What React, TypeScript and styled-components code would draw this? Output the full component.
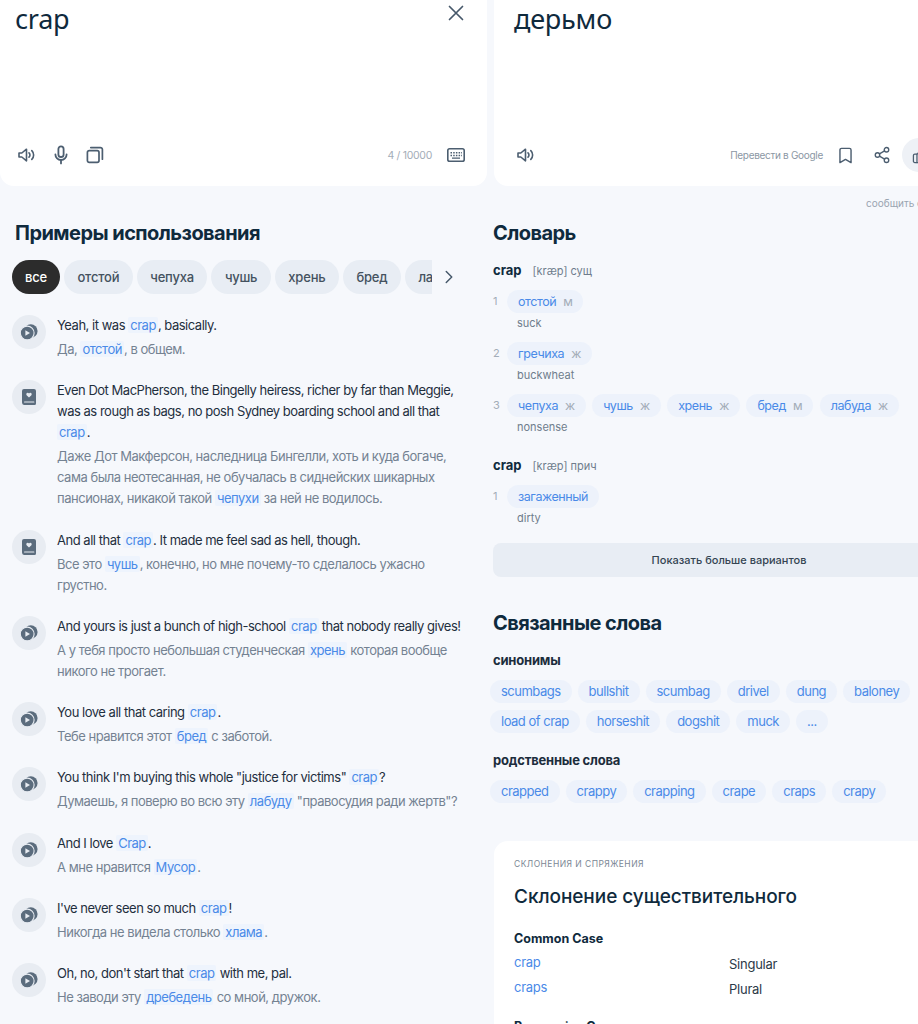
import React from "react";
import styled, { createGlobalStyle } from "styled-components";
import { Bookmark, ChevronRight, Share2, ThumbsUp } from "lucide-react";

const GlobalStyle = createGlobalStyle`
  html, body {
    margin: 0;
    background: #f6f8fc;
    font-family: Inter, "Noto Sans", sans-serif;
    color: #1c2d3c;
  }
`;

const Page = styled.div`
  display: grid;
  grid-template-columns: 487px 448px;
  column-gap: 6px;
  width: 918px;
  height: 1024px;
  overflow: hidden;
`;

const Column = styled.div`
  display: flex;
  flex-direction: column;
  min-width: 0;
`;

const Card = styled.div<{ $right?: boolean }>`
  display: flex;
  flex-direction: column;
  justify-content: space-between;
  height: 186px;
  box-sizing: border-box;
  margin-left: ${(p) => (p.$right ? "1px" : "0")};
  padding: 0 ${(p) => (p.$right ? "3px" : "19px")} 19px ${(p) => (p.$right ? "20px" : "15px")};
  background: #fff;
  border-radius: 0 0 14px 14px;
`;

const InputRow = styled.div`
  display: flex;
  align-items: flex-start;
  justify-content: space-between;
  font-size: 27px;
  line-height: 38px;
  color: #0f2a3d;
  font-family: "Noto Sans", sans-serif;
  letter-spacing: -0.2px;
`;

const CloseButton = styled.span`
  display: flex;
  margin: 5px 4px 0 0;
  color: #46586a;
`;

const Toolbar = styled.div`
  display: flex;
  align-items: center;
  height: 24px;
  color: #4c5e70;
`;

const ToolIcon = styled.span<{ $gap?: number }>`
  display: flex;
  align-items: center;
  justify-content: center;
  width: 24px;
  height: 24px;
  margin-right: ${(p) => p.$gap ?? 10}px;
`;

const Spacer = styled.span`
  flex: 1;
`;

const Counter = styled.span`
  font-size: 10.5px;
  color: #a3adb8;
  margin-right: 12px;
  letter-spacing: -0.3px;
`;

const GoogleLink = styled.span`
  font-size: 10px;
  color: #8b97a4;
  margin-right: 10px;
  letter-spacing: -0.3px;
`;

const ThumbCircle = styled.span`
  display: flex;
  align-items: center;
  justify-content: center;
  flex: none;
  width: 36px;
  height: 34px;
  border-radius: 17px;
  background: #eef1f6;
`;

const Report = styled.div`
  margin: 11px 0 0 373px;
  font-size: 10px;
  line-height: 12px;
  color: #9aa5b1;
  white-space: nowrap;
`;

const SectionTitle = styled.h2<{ $top: number }>`
  margin: ${(p) => p.$top}px 0 0;
  font-size: 20px;
  line-height: 28px;
  font-weight: 700;
  color: #0f2a3d;
  letter-spacing: -0.55px;
`;

const LeftTitle = styled(SectionTitle)`
  padding-left: 15px;
`;

const FilterRow = styled.div`
  display: flex;
  align-items: center;
  margin: 13px 0 0 12px;
`;

const FilterTrack = styled.div`
  display: flex;
  gap: 4px;
  width: 420px;
  overflow: hidden;
`;

const FilterChip = styled.span<{ $active?: boolean }>`
  flex: none;
  height: 34px;
  line-height: 34px;
  padding: 0 ${(p) => (p.$active ? "13px" : "13.5px")};
  border-radius: 17px;
  font-size: 13px;
  font-weight: 500;
  letter-spacing: -0.2px;
  background: ${(p) => (p.$active ? "#2c2c2c" : "#e8edf4")};
  color: ${(p) => (p.$active ? "#fff" : "#44525f")};
`;

const FilterArrow = styled.span`
  display: flex;
  margin-left: 6px;
  color: #46586a;
`;

const ExampleList = styled.div`
  display: flex;
  flex-direction: column;
  gap: 20.3px;
  margin: 21px 0 0 12px;
`;

const Example = styled.div`
  display: flex;
  gap: 11px;
`;

const SourceBadge = styled.span`
  display: flex;
  flex: none;
  align-items: center;
  justify-content: center;
  width: 34px;
  height: 34px;
  border-radius: 50%;
  background: #e8ecf2;
`;

const ExampleBody = styled.div`
  width: 408px;
`;

const English = styled.div`
  font-size: 13px;
  line-height: 21px;
  color: #1f2f3e;
  letter-spacing: -0.48px;
`;

const Russian = styled.div`
  margin-top: 3px;
  font-size: 13px;
  line-height: 21px;
  color: #748292;
  letter-spacing: -0.48px;
`;

const Mark = styled.span`
  padding: 0 2px;
  border-radius: 2px;
  background: #eef4fd;
  color: #4a8ae8;
`;

const DictHead = styled.div<{ $top: number }>`
  display: flex;
  align-items: baseline;
  gap: 11px;
  margin-top: ${(p) => p.$top}px;
  line-height: 20px;
`;

const DictWord = styled.span`
  font-size: 13px;
  font-weight: 700;
  color: #0f2a3d;
`;

const DictMeta = styled.span`
  font-size: 11px;
  color: #6f7d8c;
`;

const Sense = styled.div`
  display: grid;
  grid-template-columns: 14px 1fr;
  margin-top: 9px;
`;

const SenseNumber = styled.span`
  font-size: 11px;
  line-height: 23px;
  color: #a3adb8;
`;

const SenseChips = styled.div`
  display: flex;
  gap: 6.5px;
`;

const SenseChip = styled.span`
  height: 23px;
  line-height: 23px;
  padding: 0 11px;
  border-radius: 12px;
  font-size: 12.5px;
  background: #edf2fb;
  color: #4a8ae8;
  letter-spacing: -0.42px;
  white-space: nowrap;
`;

const Gender = styled.span`
  margin-left: 7px;
  color: #a3adb8;
`;

const SenseGloss = styled.div`
  grid-column: 2;
  padding-left: 10px;
  margin-top: 1px;
  font-size: 11px;
  line-height: 19px;
  color: #6f7d8c;
`;

const MoreButton = styled.div`
  margin-top: 15px;
  height: 34px;
  line-height: 34px;
  padding-left: 24px;
  border-radius: 8px;
  background: #e8edf4;
  font-size: 11px;
  font-weight: 500;
  text-align: center;
  color: #344452;
`;

const GroupLabel = styled.div<{ $top: number }>`
  margin-top: ${(p) => p.$top}px;
  font-size: 13px;
  line-height: 20px;
  font-weight: 700;
  color: #1c2d3c;
  letter-spacing: -0.2px;
`;

const RelatedChips = styled.div`
  display: flex;
  flex-wrap: wrap;
  gap: 7px 6px;
  margin: 10px 0 0 -3px;
`;

const RelatedChip = styled.span`
  height: 23px;
  line-height: 23px;
  padding: 0 11px;
  border-radius: 12px;
  background: #edf2fb;
  color: #4a8ae8;
  font-size: 13px;
  letter-spacing: -0.5px;
  white-space: nowrap;
`;

const DeclensionCard = styled.div`
  margin: 38px 0 0 1px;
  padding: 17px 20px 0;
  background: #fff;
  border-radius: 14px 14px 0 0;
  flex: 1;
`;

const Eyebrow = styled.div`
  font-size: 8.5px;
  line-height: 12px;
  letter-spacing: 0.45px;
  color: #7b8794;
  text-transform: uppercase;
`;

const DeclensionTitle = styled.h3`
  margin: 13px 0 0;
  font-size: 19px;
  line-height: 28px;
  font-weight: 500;
  color: #0f2a3d;
  letter-spacing: -0.05px;
`;

const CaseName = styled.div<{ $top: number }>`
  margin-top: ${(p) => p.$top}px;
  font-size: 12.5px;
  line-height: 18px;
  font-weight: 700;
  color: #0f2a3d;
`;

const FormRow = styled.div`
  display: grid;
  grid-template-columns: 215px 1fr;
  margin-top: 7px;
  line-height: 18px;
  font-size: 13px;
  letter-spacing: -0.25px;

  ${CaseName} + & {
    margin-top: 5px;
  }
`;

const FormLink = styled.span`
  color: #4a8ae8;
`;

const FormLabel = styled.span`
  position: relative;
  top: 2px;
  color: #2c3a48;
`;

const CloseIcon = () => (
  <svg width="16" height="16" viewBox="0 0 16 16" fill="none" stroke="currentColor" strokeWidth="1.7" strokeLinecap="round">
    <path d="M1.500 1.500l13 13M14.500 1.500l-13 13" />
  </svg>
);

const Speaker = () => (
  <svg width="18" height="18" viewBox="0 0 18 18" fill="none" stroke="currentColor" strokeWidth="1.6" strokeLinecap="round" strokeLinejoin="round">
    <path d="M1 7v4h2.800l4.700 3.800V3.200L3.800 7z" />
    <path d="M11 6.800a3 3 0 0 1 0 4.400" />
    <path d="M13.800 4.600a6.200 6.200 0 0 1 0 8.800" />
  </svg>
);

const MicIcon = () => (
  <svg width="18" height="20" viewBox="0 0 18 20" fill="none" stroke="currentColor" strokeWidth="1.8" strokeLinecap="round">
    <rect x="6.400" y="1.400" width="5.200" height="10.600" rx="2.600" />
    <path d="M3.400 9.400a5.600 5.600 0 0 0 11.200 0" />
    <path d="M9 15v3.400" />
  </svg>
);

const CopyIcon = () => (
  <svg width="18" height="18" viewBox="0 0 18 18" fill="none" stroke="currentColor" strokeWidth="1.7" strokeLinejoin="round">
    <rect x="1.400" y="4.600" width="11.600" height="11.800" rx="1.800" />
    <path d="M4.800 1.600h9.600a2 2 0 0 1 2 2v9.600" strokeLinecap="round" />
  </svg>
);

const KeyboardIcon = () => (
  <svg width="18" height="14" viewBox="0 0 18 14">
    <rect x="0.800" y="0.800" width="16.400" height="12.400" rx="1.800" fill="none" stroke="currentColor" strokeWidth="1.600" />
    <path d="M3.500 4h1.500v1.500H3.500zM6.200 4h1.500v1.500H6.200zM8.900 4h1.500v1.500H8.900zM11.600 4h1.500v1.500h-1.500zM14 4h.8v1.500H14zM3.500 6.800h1.500v1.500H3.500zM6.200 6.800h1.500v1.500H6.200zM8.900 6.800h1.500v1.500H8.900zM11.600 6.800h1.500v1.500h-1.500zM14 6.800h.8v1.500H14zM5 9.500h8v1.300H5z" fill="currentColor" />
  </svg>
);

const PlayStack = () => (
  <svg width="18" height="16" viewBox="0 0 18 16">
    <circle cx="10.800" cy="7" r="6.800" fill="#5b6c7d" />
    <circle cx="7.200" cy="9" r="6.900" fill="#5b6c7d" stroke="#e8ecf2" strokeWidth="1.100" />
    <path d="M5.400 6.300v5.400l4.600-2.700z" fill="#e8ecf2" />
  </svg>
);

const BookIcon = () => (
  <svg width="16" height="18" viewBox="0 0 16 18">
    <path d="M3 1h10a2 2 0 0 1 2 2v12.500a1.500 1.500 0 0 1-1.500 1.500H3a2.400 2.400 0 0 1-2-2.400V3a2 2 0 0 1 2-2z" fill="#5b6c7d" />
    <rect x="3" y="13.400" width="10.400" height="1.200" rx="0.600" fill="#e8ecf2" />
    <path d="M8 9.400 5.600 7.200a1.500 1.500 0 0 1 2.400-1.800 1.500 1.500 0 0 1 2.400 1.800z" fill="#e8ecf2" />
  </svg>
);

type ExampleData = { icon: "video" | "book"; en: React.ReactNode; ru: React.ReactNode };

const examples: ExampleData[] = [
  { icon: "video", en: <>Yeah, it was <Mark>crap</Mark>, basically.</>, ru: <>Да, <Mark>отстой</Mark>, в общем.</> },
  {
    icon: "book",
    en: <>Even Dot MacPherson, the Bingelly heiress, richer by far than Meggie, was as rough as bags, no posh Sydney boarding school and all that <Mark>crap</Mark>.</>,
    ru: <>Даже Дот Макферсон, наследница Бингелли, хоть и куда богаче, сама была неотесанная, не обучалась в сиднейских шикарных пансионах, никакой такой <Mark>чепухи</Mark> за ней не водилось.</>,
  },
  { icon: "book", en: <>And all that <Mark>crap</Mark>. It made me feel sad as hell, though.</>, ru: <>Все это <Mark>чушь</Mark>, конечно, но мне почему-то сделалось ужасно грустно.</> },
  { icon: "video", en: <>And yours is just a bunch of high-school <Mark>crap</Mark> that nobody really gives!</>, ru: <>А у тебя просто небольшая студенческая <Mark>хрень</Mark> которая вообще никого не трогает.</> },
  { icon: "video", en: <>You love all that caring <Mark>crap</Mark>.</>, ru: <>Тебе нравится этот <Mark>бред</Mark> с заботой.</> },
  { icon: "video", en: <>You think I'm buying this whole "justice for victims" <Mark>crap</Mark>?</>, ru: <>Думаешь, я поверю во всю эту <Mark>лабуду</Mark> "правосудия ради жертв"?</> },
  { icon: "video", en: <>And I love <Mark>Crap</Mark>.</>, ru: <>А мне нравится <Mark>Мусор</Mark>.</> },
  { icon: "video", en: <>I've never seen so much <Mark>crap</Mark>!</>, ru: <>Никогда не видела столько <Mark>хлама</Mark>.</> },
  { icon: "video", en: <>Oh, no, don't start that <Mark>crap</Mark> with me, pal.</>, ru: <>Не заводи эту <Mark>дребедень</Mark> со мной, дружок.</> },
];

const filters = ["отстой", "чепуха", "чушь", "хрень", "бред", "лабуда"];
const synonyms = ["scumbags", "bullshit", "scumbag", "drivel", "dung", "baloney", "load of crap", "horseshit", "dogshit", "muck", "..."];
const relatedWords = ["crapped", "crappy", "crapping", "crape", "craps", "crapy"];

const SenseBlock: React.FC<{ n: number; gloss: string; words: [string, string][] }> = ({ n, gloss, words }) => (
  <Sense>
    <SenseNumber>{n}</SenseNumber>
    <SenseChips>
      {words.map(([word, gender]) => (
        <SenseChip key={word}>
          {word}
          {gender && <Gender>{gender}</Gender>}
        </SenseChip>
      ))}
    </SenseChips>
    <SenseGloss>{gloss}</SenseGloss>
  </Sense>
);

export default function App() {
  return (
    <>
      <GlobalStyle />
      <Page>
        <Column>
          <Card>
            <InputRow>
              <span>crap</span>
              <CloseButton>
                <CloseIcon />
              </CloseButton>
            </InputRow>
            <Toolbar>
              <ToolIcon><Speaker /></ToolIcon>
              <ToolIcon><MicIcon /></ToolIcon>
              <ToolIcon><CopyIcon /></ToolIcon>
              <Spacer />
              <Counter>4 / 10000</Counter>
              <ToolIcon $gap={0}><KeyboardIcon /></ToolIcon>
            </Toolbar>
          </Card>
          <LeftTitle $top={33}>Примеры использования</LeftTitle>
          <FilterRow>
            <FilterTrack>
              <FilterChip $active>все</FilterChip>
              {filters.map((f) => (
                <FilterChip key={f}>{f}</FilterChip>
              ))}
            </FilterTrack>
            <FilterArrow>
              <ChevronRight size={22} strokeWidth={1.6} />
            </FilterArrow>
          </FilterRow>
          <ExampleList>
            {examples.map((ex, i) => (
              <Example key={i}>
                <SourceBadge>{ex.icon === "video" ? <PlayStack /> : <BookIcon />}</SourceBadge>
                <ExampleBody>
                  <English>{ex.en}</English>
                  <Russian>{ex.ru}</Russian>
                </ExampleBody>
              </Example>
            ))}
          </ExampleList>
        </Column>
        <Column>
          <Card $right>
            <InputRow>
              <span>дерьмо</span>
            </InputRow>
            <Toolbar>
              <ToolIcon><Speaker /></ToolIcon>
              <Spacer />
              <GoogleLink>Перевести в Google</GoogleLink>
              <ToolIcon $gap={13}><Bookmark size={19} strokeWidth={1.8} /></ToolIcon>
              <ToolIcon $gap={8}><Share2 size={18} strokeWidth={1.8} /></ToolIcon>
              <ThumbCircle><ThumbsUp size={17} strokeWidth={1.8} /></ThumbCircle>
            </Toolbar>
          </Card>
          <Report>сообщить об ошибке</Report>
          <SectionTitle $top={10}>Словарь</SectionTitle>
          <DictHead $top={13}>
            <DictWord>crap</DictWord>
            <DictMeta>[kræp] сущ</DictMeta>
          </DictHead>
          <SenseBlock n={1} gloss="suck" words={[["отстой", "м"]]} />
          <SenseBlock n={2} gloss="buckwheat" words={[["гречиха", "ж"]]} />
          <SenseBlock
            n={3}
            gloss="nonsense"
            words={[["чепуха", "ж"], ["чушь", "ж"], ["хрень", "ж"], ["бред", "м"], ["лабуда", "ж"]]}
          />
          <DictHead $top={18}>
            <DictWord>crap</DictWord>
            <DictMeta>[kræp] прич</DictMeta>
          </DictHead>
          <SenseBlock n={1} gloss="dirty" words={[["загаженный", ""]]} />
          <MoreButton>Показать больше вариантов</MoreButton>
          <SectionTitle $top={32}>Связанные слова</SectionTitle>
          <GroupLabel $top={13}>синонимы</GroupLabel>
          <RelatedChips>
            {synonyms.map((w) => (
              <RelatedChip key={w}>{w}</RelatedChip>
            ))}
          </RelatedChips>
          <GroupLabel $top={17}>родственные слова</GroupLabel>
          <RelatedChips>
            {relatedWords.map((w) => (
              <RelatedChip key={w}>{w}</RelatedChip>
            ))}
          </RelatedChips>
          <DeclensionCard>
            <Eyebrow>Склонения и спряжения</Eyebrow>
            <DeclensionTitle>Склонение существительного</DeclensionTitle>
            <CaseName $top={19}>Common Case</CaseName>
            <FormRow><FormLink>crap</FormLink><FormLabel>Singular</FormLabel></FormRow>
            <FormRow><FormLink>craps</FormLink><FormLabel>Plural</FormLabel></FormRow>
            <CaseName $top={22}>Possessive Case</CaseName>
          </DeclensionCard>
        </Column>
      </Page>
    </>
  );
}
